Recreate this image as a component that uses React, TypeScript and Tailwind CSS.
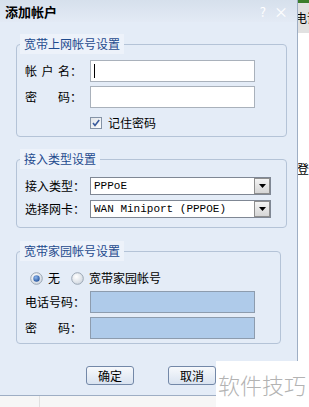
import React from "react";

const Field = ({ children }: { children: React.ReactNode }) => (
  <div className="w-[65px] shrink-0 flex items-center text-[12px] text-black">{children}</div>
);

const Spread = ({ chars }: { chars: string[] }) => (
  <span className="flex items-center">
    <span className="w-[45px] flex justify-between">
      {chars.map((c, i) => (
        <span key={i}>{c}</span>
      ))}
    </span>
    <span>：</span>
  </span>
);

const Select = ({ value }: { value: string }) => (
  <div className="w-[181px] h-[18px] border border-[#7f8794] bg-white flex items-center">
    <div className="flex-1 pl-[3px] text-[11px] leading-[16px] font-['Liberation_Mono',monospace] text-black whitespace-pre">
      {value}
    </div>
    <div className="w-[16px] h-[16px] border border-[#8e8e8e] bg-gradient-to-b from-[#f4f4f4] to-[#d6d6d6] flex items-center justify-center">
      <svg width="7" height="4" viewBox="0 0 7 4">
        <path d="M0 0 H7 L3.5 4 Z" fill="#000" />
      </svg>
    </div>
  </div>
);

const Radio = ({ on }: { on?: boolean }) => (
  <svg width="13" height="13" viewBox="0 0 13 13">
    <defs>
      <radialGradient id={on ? "rg1" : "rg2"} cx="0.4" cy="0.35" r="0.7">
        <stop offset="0" stopColor="#ffffff" />
        <stop offset="1" stopColor="#cfd6df" />
      </radialGradient>
      <radialGradient id="dot" cx="0.4" cy="0.35" r="0.7">
        <stop offset="0" stopColor="#8fb8ee" />
        <stop offset="1" stopColor="#1f4f9a" />
      </radialGradient>
    </defs>
    <circle cx="6.5" cy="6.5" r="5.8" fill={on ? "url(#rg1)" : "url(#rg2)"} stroke="#9aa6b4" strokeWidth="1" />
    {on && <circle cx="6.5" cy="6.5" r="3.2" fill="url(#dot)" />}
  </svg>
);

export default function App() {
  return (
    <div className="relative w-[309px] h-[407px] overflow-hidden bg-white flex font-['Noto_Sans_CJK_SC',sans-serif]">
      <div className="w-[298px] shrink-0 flex flex-col">
        <div className="h-[396px] flex flex-col bg-[#e4ecf7] border-r border-b border-[#9eaec4]">
          {/* title bar */}
          <div className="h-[22px] shrink-0 flex items-center justify-between pl-[5px] pr-[9px] bg-gradient-to-b from-[#d6e0ec] to-[#e3eaf5]">
            <span className="text-[13px] font-bold text-black leading-none">添加帐户</span>
            <div className="flex items-center gap-[8px] text-white text-[13px] leading-none">
              <span>?</span>
              <span className="text-[14px]">×</span>
            </div>
          </div>

          <div className="flex flex-col pl-[16px]">
            {/* group 1 */}
            <fieldset className="mt-[12px] w-[271px] border border-[#b4c3d7] rounded-[4px]">
              <legend className="ml-[3px] px-[4px] h-[20px] leading-[20px] text-[12px] text-[#1f4b8e] bg-[#edf2fa]">
                宽带上网帐号设置
              </legend>
              <div className="flex flex-col pl-[8px] pt-[6px] pb-[5px]">
                <div className="flex items-center h-[22px]">
                  <Field>
                    <Spread chars={["帐", "户", "名"]} />
                  </Field>
                  <div className="w-[165px] h-[22px] bg-white border border-[#a9b1bb] flex items-center pl-[3px]">
                    <div className="w-[1px] h-[14px] bg-black" />
                  </div>
                </div>
                <div className="flex items-center h-[22px] mt-[4px]">
                  <Field>
                    <Spread chars={["密", "码"]} />
                  </Field>
                  <div className="w-[165px] h-[22px] bg-white border border-[#a9b1bb]" />
                </div>
                <div className="flex items-center h-[16px] mt-[7px] pl-[65px] gap-[6px]">
                  <svg width="12" height="12" viewBox="0 0 12 12">
                    <defs>
                      <linearGradient id="cb" x1="0" y1="0" x2="1" y2="1">
                        <stop offset="0" stopColor="#dfe3e8" />
                        <stop offset="1" stopColor="#ffffff" />
                      </linearGradient>
                    </defs>
                    <rect x="0.5" y="0.5" width="11" height="11" fill="url(#cb)" stroke="#8593a6" />
                    <path d="M3 6 L5 8.5 L9.2 3" fill="none" stroke="#3a5b9c" strokeWidth="1.6" />
                  </svg>
                  <span className="text-[12px] text-black">记住密码</span>
                </div>
              </div>
            </fieldset>

            {/* group 2 */}
            <fieldset className="mt-[12px] w-[271px] border border-[#b4c3d7] rounded-[4px]">
              <legend className="ml-[3px] px-[4px] h-[20px] leading-[20px] text-[12px] text-[#1f4b8e] bg-[#edf2fa]">
                接入类型设置
              </legend>
              <div className="flex flex-col pl-[8px] pt-[8px] pb-[9px] gap-[5px]">
                <div className="flex items-center h-[18px]">
                  <Field>接入类型：</Field>
                  <Select value="PPPoE" />
                </div>
                <div className="flex items-center h-[18px]">
                  <Field>选择网卡：</Field>
                  <Select value="WAN Miniport (PPPOE)" />
                </div>
              </div>
            </fieldset>

            {/* group 3 */}
            <fieldset className="mt-[13px] w-[265px] border border-[#b4c3d7] rounded-[4px]">
              <legend className="ml-[3px] px-[4px] h-[20px] leading-[20px] text-[12px] text-[#1f4b8e] bg-[#edf2fa]">
                宽带家园帐号设置
              </legend>
              <div className="flex flex-col pl-[8px] pt-[10px] pb-[4px]">
                <div className="flex items-center h-[14px] pl-[5px] text-[12px] text-black">
                  <Radio on />
                  <span className="ml-[5px]">无</span>
                  <span className="ml-[11px] flex items-center">
                    <Radio />
                  </span>
                  <span className="ml-[5px]">宽带家园帐号</span>
                </div>
                <div className="flex items-center h-[22px] mt-[6px]">
                  <Field>电话号码：</Field>
                  <div className="w-[165px] h-[22px] bg-[#afcbea] border border-[#8d9cae]" />
                </div>
                <div className="flex items-center h-[22px] mt-[4px]">
                  <Field>
                    <Spread chars={["密", "码"]} />
                  </Field>
                  <div className="w-[165px] h-[22px] bg-[#afcbea] border border-[#8d9cae]" />
                </div>
              </div>
            </fieldset>

            {/* buttons */}
            <div className="flex mt-[22px] pl-[70px] gap-[34px]">
              <button className="w-[48px] h-[19px] rounded-[3px] border border-[#7388a8] bg-gradient-to-b from-[#f7f9fc] to-[#d9e3f0] text-[12px] leading-none text-black">
                确定
              </button>
              <button className="w-[48px] h-[19px] rounded-[3px] border border-[#7388a8] bg-gradient-to-b from-[#f7f9fc] to-[#d9e3f0] text-[12px] leading-none text-black">
                取消
              </button>
            </div>
          </div>
        </div>
        <div className="flex-1 bg-[#f6f6f6] flex">
          <div className="w-[40px] border-r border-[#e0e0e0]" />
        </div>
      </div>

      {/* right strip */}
      <div className="flex-1 flex flex-col overflow-hidden">
        <div className="h-[3px] bg-[#3b7d2b]" />
        <div className="h-[30px] bg-[#e1e1e1] whitespace-nowrap text-[12px] leading-[30px] text-black overflow-hidden">
          <span className="inline-block -ml-[3px]">电话</span>
        </div>
        <div className="mt-[128px] h-[16px] whitespace-nowrap text-[12px] leading-[16px] text-black overflow-hidden">
          <span className="inline-block -ml-[1px]">登录</span>
        </div>
      </div>

      {/* watermark */}
      <div className="absolute left-[216px] top-[361px] w-[93px] h-[46px] bg-white flex items-center pl-[2px]">
        <span className="text-[22px] leading-none text-[#b3b3b3] whitespace-nowrap font-light">软件技巧</span>
      </div>
    </div>
  );
}
